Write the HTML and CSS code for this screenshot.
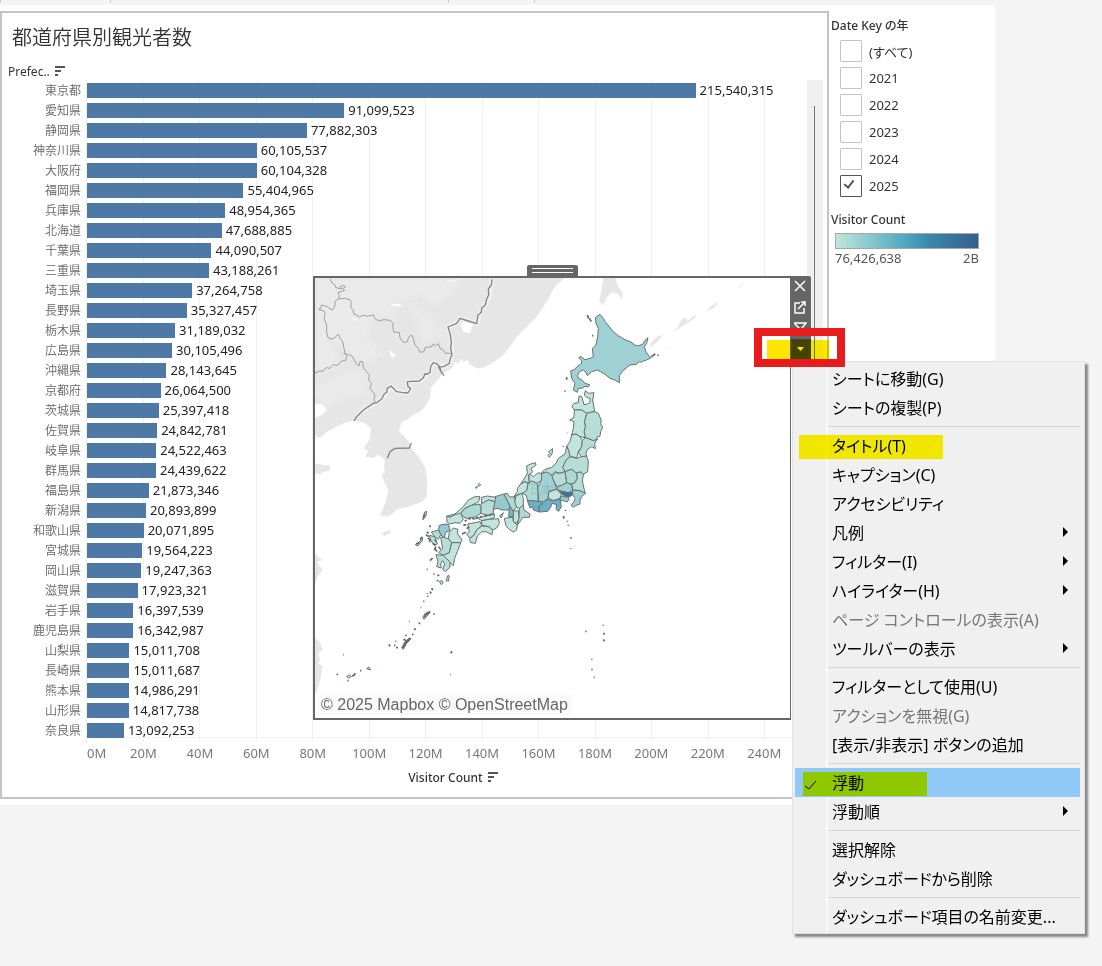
FILE: index.html
```
<!DOCTYPE html>
<html lang="ja">
<head>
    <meta charset="UTF-8">
    <meta name="viewport" content="width=device-width, initial-scale=1.0">
    <title>都道府県別観光者数</title>
    <link rel="stylesheet" href="styles.css">
</head>
<body>
    <div class="ruler"><span></span><span></span><span></span><span></span></div>
    <main class="dashboard">
        <section class="sheet">
            <h1>都道府県別観光者数</h1>
            <div class="field-name">Prefec..
                <svg class="sort-icon" viewBox="0 0 10 10"><path d="M0 0h10v2H0zM0 4h6v2H0zM0 8h3v2H0z"/></svg>
            </div>
            <div class="chart">
                <div class="chart-main">
                    <div class="grid" id="grid"></div>
                    <ul class="rows" id="rows"></ul>
                    <div class="axis" id="axis"></div>
                </div>
                <div class="scroll-track"><div class="scroll-thumb"></div></div>
            </div>
            <div class="axis-title">Visitor Count
                <svg class="sort-icon" viewBox="0 0 10 10"><path d="M0 0h10v2H0zM0 4h6v2H0zM0 8h3v2H0z"/></svg>
            </div>
        </section>

        <aside class="side">
            <h2>Date Key の年</h2>
            <div class="filter">
                <label><input type="checkbox"><span>(すべて)</span></label>
                <label><input type="checkbox"><span>2021</span></label>
                <label><input type="checkbox"><span>2022</span></label>
                <label><input type="checkbox"><span>2023</span></label>
                <label><input type="checkbox"><span>2024</span></label>
                <label><input type="checkbox" checked><span>2025</span></label>
            </div>
            <h2>Visitor Count</h2>
            <div class="legend">
                <div class="legend-bar"></div>
                <div class="legend-labels"><span>76,426,638</span><span>2B</span></div>
            </div>
        </aside>
    </main>

    <!-- floating map sheet -->
    <section class="floating">
        <div class="grip"></div>
        <div class="map">
            <svg viewBox="315 278 475 440" width="475" height="440">
                <!-- continent -->
                <g transform="translate(310 255) scale(.33333)">
                    <g class="land">
                        <path d="M15 68H742L725 110 712 138 700 155 680 185 665 200 650 216 635 230 615 252 600 275 580 300 560 315 545 325 525 335 505 341 492 335 480 330 472 315 460 322 455 310 445 325 435 322 425 340 400 355 388 368 375 385 362 400 360 430 345 455 330 470 310 480 290 495 275 500 266 530 280 540 300 565 305 580 325 605 345 635 352 680 350 725 335 742 310 750 285 758 262 762 245 778 232 785 210 780 222 755 230 730 235 705 222 680 215 658 225 652 222 635 225 615 205 598 190 608 165 605 175 588 160 580 178 555 183 520 165 505 150 500 130 498 105 503 90 510 70 520 50 530 35 545 25 550 15 540z"/>
                        <path d="M15 625 40 630 62 632 58 648 40 650 30 658 15 655z"/>
                        <path d="M15 895 25 905 36 915 20 920 38 946 25 960 15 990z"/>
                        <path d="M15 1150 28 1160 38 1185 25 1195 30 1215 15 1240z"/>
                        <path d="M216 840 222 830 243 825 240 835 225 842z"/>
                        <path d="M15 1220 37 1232 32 1270 20 1310 15 1315z"/>
                    </g>
                    <path class="relief" d="M15 68H460L430 110 380 150 330 120 270 140 250 190 200 180 170 240 210 300 160 330 110 290 60 250 90 340 40 350 15 340zM300 150 360 180 400 240 340 260zM120 340 180 370 160 420 90 430 40 470 15 400z"/>
                    <path class="lake" d="M452 210 465 190 492 200 486 215 480 235 460 230zM15 445 35 448 50 462 40 478 15 490zM125 185 150 198 130 194zM235 150 262 146 285 154 255 152zM408 78 455 72 420 80zM236 285 258 300 246 310z"/>
                    <path class="halo" d="M546 74 542 110 530 145 512 170 500 206 450 190 440 205 414 216 424 260 426 300 418 325 400 335 370 323 358 352 332 378 292 380 300 405 294 414 260 410 243 393 222 425 200 443 160 465 140 485"/>
                    <path class="region-line" d="M60 72 66 84 75 90 78 98 95 102 90 95 100 90 106 96 98 100 104 106 84 113 88 122 86 132 104 130 120 134 124 142 122 158 130 165 132 178 140 180 148 186 160 180 170 184 190 180 194 190 205 198 222 194 240 196 250 205 248 218 252 232 268 232 270 248 280 262 292 260 296 246 305 240 310 250 315 270 325 280 330 292 342 290 345 278 365 275 368 268 376 272 385 266 390 280 400 285 406 295 416 294 425 300M86 132 76 138 74 155 68 165 60 162 52 155 34 150 32 160 26 163 42 168 46 178 42 190 50 210 50 232 54 248 62 252 72 250 85 238 92 252 98 260 102 280 105 295 110 302 108 315 92 320 85 330 68 330 60 340 48 338 40 348 28 348 15 354M100 295 112 298 125 302 135 318 140 328 148 332 150 320 158 320 160 338 170 350 178 360 176 375 184 385 180 400 188 410 195 420 192 432 196 444"/>
                    <path class="border-line" d="M546 74 544 90 535 102 536 120 530 132 526 150 515 160 514 172 504 180 500 206 475 198 450 190 440 205 414 216 420 235 424 260 422 280 426 300 420 312 418 325 400 335 386 336 392 348 402 362M392 348 390 336 380 326 370 323 362 335 360 352 350 358 345 356 340 368 328 378 292 380 294 395 302 400 294 414 275 412 260 410 250 400 243 393 232 400 230 412 222 418 215 432 200 443 190 445 160 465 140 485 132 498M232 610 240 590 255 580 298 579 304 564"/>
                </g>

                <!-- Sakhalin, Kuril islands and Hokkaido -->
                <g transform="translate(550 255) scale(.33333)">
                    <path class="land" d="M0 68 45 68 20 90 5 110 0 120zM160 68H196L205 95 218 115 216 135 205 118 185 112 172 125 158 152 148 135 156 100zM298 278 305 262 325 242 340 240 320 262zM360 240 380 222 392 198 405 186 412 198 438 178 434 190 408 206zM468 170 485 152 508 138 492 158zM565 98 580 82 574 94zM345 282 356 276 352 282z"/>
                    <path class="pref c4" d="M150 178 160 190 166 200 178 215 190 230 205 242 225 254 240 260 248 264 252 270 265 272 278 268 285 256 294 248 290 265 283 275 288 290 296 302 304 308 290 315 280 318 275 322 268 320 258 328 240 330 230 338 218 348 208 362 208 383 196 376 180 370 165 358 152 350 142 345 125 350 112 362 108 352 100 345 88 350 83 360 85 370 95 374 104 384 120 390 115 396 105 394 96 400 85 400 82 412 70 405 75 385 65 370 62 348 74 343 80 336 95 325 94 316 86 308 92 304 105 314 120 310 130 306 127 280 138 270 143 245 145 220 138 205 136 188z"/>
                    <path class="islet" d="M112 180 116 190M118 190 124 200M126 242h4M50 366v8M44 408h3M304 305l12-8M322 301l4-1"/>
                </g>

                <!-- Honshu, Shikoku, Kyushu -->
                <g transform="translate(400 380) scale(.33333)">
                    <g class="pref">
                        <path class="c1" d="M537 48 545 50 550 66 552 74 562 72 570 68 570 55 560 52 553 45 556 32 566 40 582 38 578 60 584 95 572 97 560 100 545 90 523 90 516 80 522 70 535 68z"/>
                        <path class="c2" d="M560 100 572 97 584 95 595 100 600 112 604 120 602 132 608 142 602 155 600 168 590 172 592 178 580 182 575 180 565 176 556 173 552 155 556 140 553 125z"/>
                        <path class="c1" d="M523 90 545 90 560 100 553 125 556 140 552 155 556 173 540 170 528 162 515 165 520 145 522 125 509 120 522 112z"/>
                        <path class="c1" d="M515 165 528 162 540 170 547 182 545 200 535 215 530 235 518 230 510 232 507 215 500 198 510 185z"/>
                        <path class="c2" d="M547 182 556 173 565 176 580 182 592 178 584 190 586 206 575 200 562 208 558 220 560 228 545 232 535 218 545 200z"/>
                        <path class="c2" d="M498 240 510 230 530 235 545 230 560 228 565 245 563 275 550 283 540 276 530 280 515 268 495 275 488 262z"/>
                        <path class="c2" d="M500 198 507 215 510 230 498 240 488 262 495 275 480 280 465 275 455 285 440 280 425 278 435 268 455 262 468 250 475 235 495 222 498 210z"/>
                        <path class="c3" d="M495 275 515 268 530 280 532 295 525 308 515 312 500 310 497 290z"/>
                        <path class="c2" d="M530 278 540 276 551 283 547 300 550 318 556 340 540 332 518 330 515 312 525 308 532 295z"/>
                        <path class="c2" d="M455 292 465 278 480 280 495 275 497 290 500 308 485 316 472 320 465 310z"/>
                        <path class="c4" d="M472 320 485 316 500 308 515 314 518 332 505 338 490 335 470 328z"/>
                        <path class="c9" d="M476 332 490 335 505 338 518 337 516 346 505 352 490 346z"/>
                        <path class="c5" d="M485 348 505 352 507 358 502 366 490 362 478 362z"/>
                        <path class="c4" d="M518 330 540 332 556 340 545 350 540 360 540 372 528 376 520 382 513 376 520 368 526 355 518 345z"/>
                        <path class="c1" d="M445 335 470 328 484 342 480 355 460 362 446 355z"/>
                        <path class="c7" d="M415 378 430 365 444 358 460 362 480 358 484 380 476 394 468 388 470 374 456 370 452 382 443 394 418 396z"/>
                        <path class="c7" d="M382 362 400 362 420 366 428 372 415 380 419 396 400 390 398 380 390 384z"/>
                        <path class="c4" d="M425 280 440 276 455 285 460 300 465 312 470 328 447 333 444 355 430 366 414 362 416 345 411 325 420 310z"/>
                        <path class="c1" d="M386 280 400 290 415 278 425 282 424 302 410 310 395 303 388 310z"/>
                        <path class="c3" d="M384 310 395 303 412 310 414 345 414 364 400 362 383 362 378 345 366 340 380 330z"/>
                        <path class="c1" d="M406 248 408 255 393 266 398 276 385 285 388 310 375 305 362 312 370 300 382 280 380 258 392 252z"/>
                        <path class="c1" d="M362 312 375 305 384 310 380 332 366 340 352 344 340 352 352 335 352 325z"/>
                        <path class="c1" d="M348 348 365 340 370 355 370 375 358 385 348 382 344 365z"/>
                        <path class="c3" d="M312 342 322 340 328 350 345 352 344 365 350 382 340 392 330 380 325 368z"/>
                        <path class="c3" d="M358 385 370 375 372 390 390 402 388 412 368 412 360 425 352 435 357 410z"/>
                        <path class="c1" d="M340 393 355 392 357 415 350 430 340 425z"/>
                        <path class="c6" d="M328 378 340 393 340 410 326 410z"/>
                        <path class="c1" d="M313 415 338 412 340 425 352 435 350 450 340 456 328 448 318 438z"/>
                        <path class="c5" d="M285 350 312 342 318 355 325 368 330 380 326 390 305 390 294 385 280 388z"/>
                        <path class="c1" d="M245 352 262 348 287 352 285 365 265 360 245 372z"/>
                        <path class="c2" d="M243 372 265 360 285 365 280 388 280 402 262 406 242 400z"/>
                        <path class="c1" d="M142 408 165 402 190 380 205 360 225 350 240 350 236 365 215 376 195 385 182 400 162 410 150 412z"/>
                        <path class="c3" d="M182 400 195 385 215 376 238 372 243 385 242 400 228 410 200 415 192 412z"/>
                        <path class="c1" d="M140 408 150 412 165 404 182 400 190 418 180 430 165 428 150 432 141 426z"/>
                        <path class="c1" d="M232 414 250 410 284 402 282 414 268 418 245 422z"/>
                        <path class="c1" d="M203 432 225 428 240 425 245 436 230 450 222 465 210 475 200 462 208 455z"/>
                        <path class="c1" d="M208 478 222 465 230 450 245 438 268 440 278 452 276 464 258 455 245 456 232 468 226 490 212 488z"/>
                        <path class="c1" d="M245 422 268 418 296 416 298 430 290 444 278 450 268 440 245 436z"/>
                        <path class="c5" d="M118 436 135 432 146 434 150 452 138 456 132 474 122 464 116 450z"/>
                        <path class="c1" d="M148 456 160 444 174 448 172 460 186 480 182 488 155 488 145 476z"/>
                        <path class="c2" d="M94 456 116 450 122 464 115 478 104 470z"/>
                        <path class="c2" d="M88 466 104 470 112 492 104 496 92 482z"/>
                        <path class="c2" d="M122 472 132 472 145 476 155 488 148 518 130 526 116 518 128 505z"/>
                        <path class="c1" d="M155 488 182 488 172 515 164 535 160 557 150 548 130 526 148 518z"/>
                        <path class="c2" d="M108 524 130 526 150 546 150 562 136 575 128 568 134 552 128 542 122 552 124 564 110 560 114 545z"/>
                        <path class="c1" d="M445 215 458 206 456 222 448 232 444 226 450 220z"/>
                        <path class="c4" d="M298 408 310 398 304 414z"/>
                        <path class="c1" d="M118 604 126 602 130 608 124 614zM138 602 144 586 148 588 145 604z"/>
                        <path class="c1" d="M68 420 74 396 80 394 78 408zM46 494 60 484 66 470 68 480 54 498z"/>
                        <path class="c1" d="M234 314 238 310 242 314 238 319zM226 323 232 319 230 325z"/>
                    </g>
                    <path class="islet" d="M90 436v6M80 456l6 4M78 464l8 6M92 478l-4 8M98 490l8 6M108 500l-4 8 8 6M116 500l6 8M104 480l6 4M84 474l6 6M48 492l10-4M60 478l6-6M70 414l4-12M90 542l8-8M80 568h3M100 582h4M112 586h6M110 602h5M94 628l4-3M90 640l4-3M82 650l3-2M190 436l8-2M194 424l6-4M205 418l8-3M216 414l8 4M226 416l8-4M240 412l6-4M254 408l8-4M268 406l8-4M186 462l12-5M208 440l-8 6M496 390l1 3M490 408l2 8M502 422v3M505 434v3M512 472l2 4M512 504v2M502 158v2M490 198v2M494 32v2"/>
                    <text class="country" x="388" y="342">日本</text>
                </g>

                <!-- southern islands -->
                <g transform="translate(310 560) scale(.33333)">
                    <path class="pref c1" d="M338 172 346 160 360 154 355 164 342 178zM275 264 284 246 298 234 303 236 290 250 280 268zM110 350 118 344 124 350 116 354zM170 326 176 321 182 330z"/>
                    <path class="islet" d="M342 172l8-10 10-6M278 264l8-14 14-14M286 240l4 6M370 162l4 1M326 188l4 4M312 208l6-1M306 224l4-2M288 224v5M280 240l6-2M297 184h2M332 142h2M340 125l3-2M352 100v2M360 98l3-3M366 90l3-3M236 254l5 4M256 244h3M258 262l6 2M252 256h4M422 280l4-6M421 344h2M80 342l4 2M112 362h4M126 348l6-2 4-6M150 332h4M100 284h2M826 214h4M880 194v3M882 218v6M880 238l3 6M844 298h3M844 328h4M851 352h3"/>
                </g>
            </svg>
            <div class="attribution">© 2025 Mapbox © OpenStreetMap</div>
        </div>
        <div class="toolbar">
            <button aria-label="閉じる"><svg viewBox="0 0 13 13"><path d="M1 1l10 10M11 1l-10 10"/></svg></button>
            <button aria-label="シートに移動"><svg viewBox="0 0 13 13"><path d="M6 2H1v10h9V7M4 8l7-7M7 1h4v4"/></svg></button>
            <button aria-label="フィルター"><svg viewBox="0 0 13 13"><path d="M0 1h12L8 6v5H5V6z"/></svg></button>
            <button class="open" aria-label="その他のオプション"><svg viewBox="0 0 13 13"><path class="caret" d="M3 4h7l-3.500 4z"/></svg></button>
        </div>
    </section>
    <div class="marker"></div>

    <div class="menu" role="menu">
        <button role="menuitem">シートに移動(G)</button>
        <button role="menuitem">シートの複製(P)</button>
        <hr>
        <button role="menuitem" class="marked marked-title">タイトル(T)</button>
        <button role="menuitem">キャプション(C)</button>
        <button role="menuitem">アクセシビリティ</button>
        <button role="menuitem" class="sub">凡例</button>
        <button role="menuitem" class="sub">フィルター(I)</button>
        <button role="menuitem" class="sub">ハイライター(H)</button>
        <button role="menuitem" disabled>ページ コントロールの表示(A)</button>
        <button role="menuitem" class="sub">ツールバーの表示</button>
        <hr>
        <button role="menuitem">フィルターとして使用(U)</button>
        <button role="menuitem" disabled>アクションを無視(G)</button>
        <button role="menuitem">[表示/非表示] ボタンの追加</button>
        <hr>
        <button role="menuitem" class="selected marked marked-float">
            <svg class="check" viewBox="0 0 13 10"><path d="M1 6l4 3 7-8"/></svg>浮動
        </button>
        <button role="menuitem" class="sub">浮動順</button>
        <hr>
        <button role="menuitem">選択解除</button>
        <button role="menuitem">ダッシュボードから削除</button>
        <hr>
        <button role="menuitem">ダッシュボード項目の名前変更...</button>
    </div>

    <script src="script.js"></script>
</body>
</html>
```
FILE: styles.css
```
* {
    box-sizing: border-box;
}
body {
    position: relative;
    margin: 0;
    min-height: 100vh;
    background: #f4f4f4;
    color: #333;
    font-family: "Noto Sans", "Noto Sans CJK JP", sans-serif;
    font-size: 12px;
}
button {
    font: inherit;
    border: none;
    background: none;
    padding: 0;
}
.ruler {
    display: grid;
    grid-template-columns: 110px 338px 86px 1fr;
    height: 5px;
}
.ruler span {
    border-left: 1px solid #d0d0d0;
    height: 3px;
}
.dashboard {
    display: flex;
    margin-right: 107px;
    padding: 6px 0;
    background: #fff;
}

/* bar chart sheet */
.sheet {
    flex: 1;
    border: 2px solid #c4c4c4;
    padding: 0 4px 9px 0;
}
h1 {
    margin: 11px 0 0 10px;
    font-size: 20px;
    line-height: 28px;
    font-weight: 350;
}
.sort-icon {
    width: 10px;
    height: 10px;
    margin-left: 2px;
    fill: #555;
}
.field-name {
    margin: 11px 0 0 6px;
    height: 17px;
    line-height: 17px;
}
.chart {
    display: flex;
}
.chart-main {
    position: relative;
    flex: 1;
}
.grid {
    position: absolute;
    top: 0;
    left: 84px;
    right: 0;
    height: 662px;
    display: flex;
    overflow: hidden;
}
.grid::after {
    content: "";
    position: absolute;
    left: 0;
    right: 0;
    bottom: 4px;
    border-top: 1px solid #f0f0f0;
}
.grid span {
    flex: none;
    border-left: 1px solid #f0f0f0;
}
.rows {
    position: relative;
    list-style: none;
    margin: 0;
    padding: 0;
}
.rows li {
    display: flex;
    height: 20px;
    line-height: 20px;
}
.name {
    width: 85px;
    padding-right: 6px;
    text-align: right;
    line-height: 22px;
    color: #666;
    font-weight: 350;
}
.plot {
    flex: 1;
    display: flex;
}
.bar {
    flex: none;
    height: 15px;
    margin: 3px 4px 0 0;
    background: #4e79a7;
}
.value {
    font-size: 13px;
    line-height: 21px;
    color: #222;
}
.axis {
    display: flex;
    margin: 3px 0 0 85px;
    line-height: 20px;
    font-size: 13px;
    color: #787878;
}
.axis span {
    flex: none;
    text-align: center;
}
.axis .zero {
    text-align: left;
}
.scroll-track {
    width: 16px;
    height: 660px;
    background: #f0f0f0;
}
.scroll-thumb {
    width: 1px;
    height: 600px;
    margin: 26px 0 0 7px;
    background: #777;
}
.axis-title {
    padding: 5px 0 0 81px;
    line-height: 20px;
    text-align: center;
    font-weight: 500;
}

/* filter and legend */
.side {
    width: 166px;
    padding: 7px 0 0 2px;
}
.side h2 {
    margin: 0;
    font-size: 12px;
    line-height: 16px;
    font-weight: 500;
    font-feature-settings: "palt";
}
.filter {
    display: flex;
    flex-direction: column;
    gap: 5px;
    margin: 6px 0 15px 9px;
}
.filter label {
    display: flex;
    align-items: center;
    gap: 7px;
    height: 22px;
    font-size: 13px;
    font-feature-settings: "palt";
}
.filter input {
    appearance: none;
    width: 22px;
    height: 22px;
    margin: 0;
    border: 1px solid #c4c4c4;
    border-radius: 1px;
    background: #fff;
}
.filter input:checked {
    border-color: #555;
    padding: 2px;
}
.filter input:checked::before {
    content: "";
    display: block;
    width: 4px;
    height: 8px;
    margin-left: 3px;
    border: solid #555;
    border-width: 0 2px 2px 0;
    transform: rotate(38deg);
}
.legend {
    width: 144px;
    margin: 5px 0 0 4px;
}
.legend-bar {
    height: 16px;
    border: 1px solid #aca899;
    background: linear-gradient(90deg, #c1e5dc, #4ba6bf 50%, #3a87ac 66%, #355f8b);
}
.legend-labels {
    display: flex;
    justify-content: space-between;
    font-size: 13px;
    line-height: 19px;
    color: #555;
}

/* floating map */
.floating {
    position: absolute;
    left: 313px;
    top: 276px;
    display: flex;
    align-items: flex-start;
}
.floating::after {
    content: "";
    position: absolute;
    left: 454px;
    top: 64px;
    width: 62px;
    height: 22px;
    background: #ffe600;
    mix-blend-mode: darken;
}
.grip {
    position: absolute;
    left: 214px;
    top: -11px;
    width: 51px;
    height: 12px;
    border: 3px solid #666;
    border-width: 3px 5px;
    border-radius: 2px 2px 0 0;
    background: linear-gradient(#fff 1px, #666 1px 4px, #fff 4px 5px, #666 5px);
}
.map {
    position: relative;
    border: 2px solid #666;
    border-right-width: 1px;
    background: #fff;
}
.map svg {
    display: block;
}
.land {
    fill: #e6e6e6;
}
.relief {
    fill: #eaeaea;
    stroke: #e8e8e8;
    stroke-width: 12px;
    stroke-linejoin: round;
}
.lake {
    fill: #fff;
}
.halo {
    fill: none;
    stroke: #efefef;
    stroke-width: 14px;
    stroke-linejoin: round;
}
.region-line,
.border-line {
    fill: none;
    stroke: #a0a0a0;
    stroke-width: 3px;
    stroke-linejoin: round;
}
.border-line {
    stroke: #858585;
    stroke-width: 4px;
}
.pref {
    stroke: #66706f;
    stroke-width: 3px;
    stroke-linejoin: round;
}
.islet {
    fill: none;
    stroke: #5e6867;
    stroke-width: 5px;
}
.c1 { fill: #c1e5dc; }
.c2 { fill: #b6ddd8; }
.c3 { fill: #add8d6; }
.c4 { fill: #9fd0d3; }
.c5 { fill: #94c9d0; }
.c6 { fill: #76b7c6; }
.c7 { fill: #6ab1c5; }
.c9 { fill: #44709c; }
.country {
    font-size: 36px;
    fill: #6fa9ad;
    opacity: .4;
}
.attribution {
    position: absolute;
    left: 3px;
    bottom: 3px;
    padding: 0 4px 0 3px;
    font: 16px/21px "Liberation Sans", sans-serif;
    color: #666;
    background: #fafafa;
}
.toolbar {
    display: flex;
    flex-direction: column;
    width: 21px;
    margin-left: -1px;
    background: #666;
    border-radius: 0 2px 0 0;
}
.toolbar button {
    height: 21px;
    line-height: 0;
}
.toolbar button.open {
    background: #444;
}
.toolbar svg {
    width: 13px;
    height: 13px;
    fill: none;
    stroke: #fff;
    stroke-width: 1.5px;
}
.toolbar .caret {
    fill: #fff;
    stroke: none;
}

/* red frame round the open menu button */
.marker {
    position: absolute;
    left: 754px;
    top: 328px;
    width: 91px;
    height: 39px;
    z-index: 2;
    border: 8px solid #e81c1c;
}

/* context menu */
.menu {
    position: absolute;
    left: 792px;
    top: 361px;
    width: 293px;
    padding: 2px 4px 2px 2px;
    border: 1px solid #e0e0e0;
    background: linear-gradient(90deg, #f0f0f0 33px, #fafafa 33px 35px, #f0f0f0 35px);
    box-shadow: 3px 3px 2px #888;
    font-feature-settings: "palt";
    font-size: 16px;
}
.menu button {
    position: relative;
    display: block;
    width: 100%;
    height: 29px;
    padding-left: 37px;
    line-height: 30px;
    text-align: left;
    white-space: nowrap;
    color: #000;
}
.menu button:disabled {
    color: #777;
}
.menu hr {
    height: 1px;
    margin: 4px 0 4px 33px;
    border: none;
    background: #d4d4d4;
}
.menu .sub::after {
    content: "";
    position: absolute;
    right: 12px;
    top: 9px;
    border: 5px solid transparent;
    border-left-color: #000;
    border-right-width: 0;
}
.menu .selected {
    background: #90c8f8;
}
.menu .marked::before {
    content: "";
    position: absolute;
    top: 4px;
    height: 24px;
    background: #ffe600;
    mix-blend-mode: darken;
}
.menu .marked-title::before {
    left: 4px;
    width: 144px;
}
.menu .marked-float::before {
    left: 8px;
    width: 124px;
}
.check {
    position: absolute;
    left: 9px;
    top: 12px;
    width: 13px;
    height: 10px;
    fill: none;
    stroke: #000;
}
```
FILE: script.js
```
const data = [
    ['東京都', 215540315], ['愛知県', 91099523], ['静岡県', 77882303],
    ['神奈川県', 60105537], ['大阪府', 60104328], ['福岡県', 55404965],
    ['兵庫県', 48954365], ['北海道', 47688885], ['千葉県', 44090507],
    ['三重県', 43188261], ['埼玉県', 37264758], ['長野県', 35327457],
    ['栃木県', 31189032], ['広島県', 30105496], ['沖縄県', 28143645],
    ['京都府', 26064500], ['茨城県', 25397418], ['佐賀県', 24842781],
    ['岐阜県', 24522463], ['群馬県', 24439622], ['福島県', 21873346],
    ['新潟県', 20893899], ['和歌山県', 20071895], ['宮城県', 19564223],
    ['岡山県', 19247363], ['滋賀県', 17923321], ['岩手県', 16397539],
    ['鹿児島県', 16342987], ['山梨県', 15011708], ['長崎県', 15011687],
    ['熊本県', 14986291], ['山形県', 14817738], ['奈良県', 13092253]
];
const max = 255000000;
const step = 20000000;

function percent(value) {
    return (value / max * 100).toFixed(2) + '%';
}

const rows = document.getElementById('rows');
data.forEach(function([name, count]) {
    const li = document.createElement('li');
    li.innerHTML = '<span class="name">' + name + '</span>' +
        '<div class="plot"><div class="bar" style="width:' + percent(count) + '"></div>' +
        '<span class="value">' + count.toLocaleString('en-US') + '</span></div>';
    rows.appendChild(li);
});

const grid = document.getElementById('grid');
const axis = document.getElementById('axis');
for (let i = 0; i <= 12; i++) {
    const line = document.createElement('span');
    line.style.width = percent(step);
    grid.appendChild(line);

    // the first label starts at the axis, the others are centred on their tick
    const label = document.createElement('span');
    label.textContent = i * 20 + 'M';
    label.style.width = percent(i === 0 ? step / 2 : step);
    if (i === 0) {
        label.className = 'zero';
    }
    axis.appendChild(label);
}
```
